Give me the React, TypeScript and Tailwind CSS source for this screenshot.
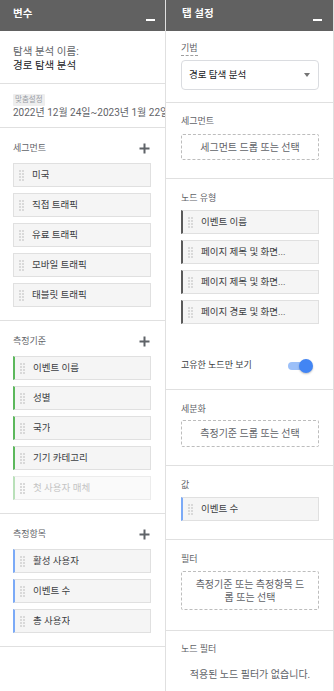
import React from "react";

type Accent = "none" | "green" | "blue" | "dark" | "faded";

function DragHandle() {
  return (
    <div className="grid grid-cols-2 gap-[1px] shrink-0">
      {Array.from({ length: 8 }).map((_, i) => (
        <span key={i} className="block w-[2px] h-[2px] bg-[#d9d9d9]" />
      ))}
    </div>
  );
}

function Chip({ label, accent = "none" }: { label: string; accent?: Accent }) {
  const accentCls =
    accent === "green"
      ? "border-l-2 border-l-[#5cb85c]"
      : accent === "blue"
      ? "border-l-2 border-l-[#7baaf7]"
      : accent === "dark"
      ? "border-l-2 border-l-[#5a5a5a]"
      : accent === "faded"
      ? "border-l-2 border-l-[#b9e0b9]"
      : "";
  return (
    <div
      className={`h-[24px] flex items-center gap-[8px] pl-[5px] bg-[#f5f5f5] border border-[#e0e0e0] ${accentCls} ${
        accent === "faded" ? "bg-[#fafafa] border-[#ececec]" : ""
      }`}
    >
      <DragHandle />
      <span
        className={`text-[9.5px] leading-[14px] whitespace-nowrap overflow-hidden text-ellipsis ${
          accent === "faded" ? "text-[#c4c4c4]" : "text-[#3c4043]"
        }`}
      >
        {label}
      </span>
    </div>
  );
}

function PlusIcon() {
  return (
    <svg width="11" height="11" viewBox="0 0 11 11" className="shrink-0">
      <path d="M5.5 0.5v10M0.5 5.5h10" stroke="#5f6368" strokeWidth="2" />
    </svg>
  );
}

function Header({ title, pl, pr }: { title: string; pl: string; pr: string }) {
  return (
    <div className={`h-[31px] bg-[#616161] flex justify-between shrink-0 ${pl} ${pr}`}>
      <span className="text-white font-bold text-[10.5px] leading-[14px] mt-[7px]">{title}</span>
      <span className="block w-[9px] h-[2px] bg-white mt-[19px]" />
    </div>
  );
}

function ListSection({ title, items, accent }: { title: string; items: string[]; accent: Accent }) {
  return (
    <div className="pl-[13px] pr-[14px] pt-[13px] pb-[13px] border-b border-[#e0e0e0]">
      <div className="flex items-center justify-between mb-[8px] pr-[1px]">
        <span className="text-[9px] leading-[14px] text-[#5f6368]">{title}</span>
        <PlusIcon />
      </div>
      <div className="flex flex-col gap-[6px]">
        {items.map((it, i) => (
          <Chip
            key={i}
            label={it}
            accent={accent === "green" && i === items.length - 1 ? "faded" : accent}
          />
        ))}
      </div>
    </div>
  );
}

function DropZone({ text, h }: { text: React.ReactNode; h: string }) {
  return (
    <div
      className={`${h} border border-dashed border-[#bdbdbd] rounded-[2px] flex items-center justify-center text-center px-[10px] text-[10px] leading-[13px] text-[#5f6368]`}
    >
      {text}
    </div>
  );
}

function Label({ children }: { children: React.ReactNode }) {
  return <div className="text-[9px] leading-[14px] text-[#5f6368]">{children}</div>;
}

export default function App() {
  return (
    <div className="flex w-[334px] h-[691px] bg-white font-[Roboto,'Noto_Sans_CJK_KR',sans-serif]">
      {/* 변수 panel */}
      <div className="w-[166px] shrink-0 border-r border-[#e0e0e0] flex flex-col">
        <Header title="변수" pl="pl-[13px]" pr="pr-[10px]" />

        <div className="px-[13px] pt-[14px] pb-[10px] border-b border-[#e0e0e0]">
          <div className="text-[10.5px] leading-[14px] text-[#5f6368]">탐색 분석 이름:</div>
          <div className="text-[10.5px] leading-[14px] text-[#202124]">경로 탐색 분석</div>
        </div>

        <div className="pl-[13px] pt-[10px] pb-[7px] border-b border-[#e0e0e0] overflow-hidden">
          <div className="flex items-center w-fit h-[12px] px-[2px] bg-[#eeeeee] text-[7.5px] leading-[12px] text-[#9aa0a6] rounded-[1px]">
            맞춤설정
          </div>
          <div className="text-[10px] leading-[14px] text-[#5f6368] whitespace-nowrap">
            2022년 12월 24일~2023년 1월 22일
          </div>
        </div>

        <ListSection
          title="세그먼트"
          accent="none"
          items={["미국", "직접 트래픽", "유료 트래픽", "모바일 트래픽", "태블릿 트래픽"]}
        />
        <ListSection
          title="측정기준"
          accent="green"
          items={["이벤트 이름", "성별", "국가", "기기 카테고리", "첫 사용자 매체"]}
        />
        <ListSection title="측정항목" accent="blue" items={["활성 사용자", "이벤트 수", "총 사용자"]} />
      </div>

      {/* 탭 설정 panel */}
      <div className="w-[168px] shrink-0 border-r border-[#e0e0e0] flex flex-col">
        <Header title="탭 설정" pl="pl-[16px]" pr="pr-[11px]" />

        <div className="pl-[15px] pr-[14px] pt-[10px] pb-[12px] border-b border-[#e0e0e0]">
          <div className="w-fit text-[9px] leading-[14px] text-[#5f6368] border-b border-dashed border-[#9e9e9e]">
            기법
          </div>
          <div className="mt-[4px] h-[30px] border border-[#dadce0] rounded-[4px] flex items-center justify-between pl-[7px] pr-[8px]">
            <span className="text-[9.5px] text-[#202124]">경로 탐색 분석</span>
            <span className="w-0 h-0 border-l-[3.5px] border-r-[3.5px] border-t-[4px] border-l-transparent border-r-transparent border-t-[#757575]" />
          </div>
        </div>

        <div className="pl-[15px] pr-[14px] pt-[11px] pb-[18px] border-b border-[#e0e0e0]">
          <Label>세그먼트</Label>
          <div className="mt-[6px]">
            <DropZone h="h-[26px]" text="세그먼트 드롭 또는 선택" />
          </div>
        </div>

        <div className="pl-[15px] pr-[14px] pt-[12px] pb-[11px] border-b border-[#e0e0e0]">
          <Label>노드 유형</Label>
          <div className="mt-[5px] flex flex-col gap-[6px]">
            {["이벤트 이름", "페이지 제목 및 화면...", "페이지 제목 및 화면...", "페이지 경로 및 화면..."].map((t, i) => (
              <Chip key={i} label={t} accent="dark" />
            ))}
          </div>
          <div className="mt-[30px] h-[24px] flex items-center justify-between pr-[6px]">
            <span className="text-[9px] text-[#3c4043]">고유한 노드만 보기</span>
            <div className="relative w-[25px] h-[14px]">
              <span className="absolute left-0 top-[3px] w-[21px] h-[8px] rounded-full bg-[#9cc0f9]" />
              <span className="absolute right-0 top-0 w-[14px] h-[14px] rounded-full bg-[#4285f4] shadow-[0_1px_2px_rgba(0,0,0,0.25)]" />
            </div>
          </div>
        </div>

        <div className="pl-[15px] pr-[14px] pt-[12px] pb-[18px] border-b border-[#e0e0e0]">
          <Label>세분화</Label>
          <div className="mt-[4px]">
            <DropZone h="h-[27px]" text="측정기준 드롭 또는 선택" />
          </div>
        </div>

        <div className="pl-[15px] pr-[14px] pt-[12px] pb-[18px] border-b border-[#e0e0e0]">
          <Label>값</Label>
          <div className="mt-[5px]">
            <Chip label="이벤트 수" accent="blue" />
          </div>
        </div>

        <div className="pl-[15px] pr-[14px] pt-[12px] pb-[20px] border-b border-[#e0e0e0]">
          <Label>필터</Label>
          <div className="mt-[5px]">
            <DropZone
              h="h-[39px]"
              text={
                <span>
                  측정기준 또는 측정항목 드
                  <br />롭 또는 선택
                </span>
              }
            />
          </div>
        </div>

        <div className="pl-[15px] pr-[14px] pt-[11px]">
          <Label>노드 필터</Label>
          <div className="mt-[12px] text-center text-[10px] leading-[14px] text-[#5f6368]">
            적용된 노드 필터가 없습니다.
          </div>
        </div>
      </div>
    </div>
  );
}
